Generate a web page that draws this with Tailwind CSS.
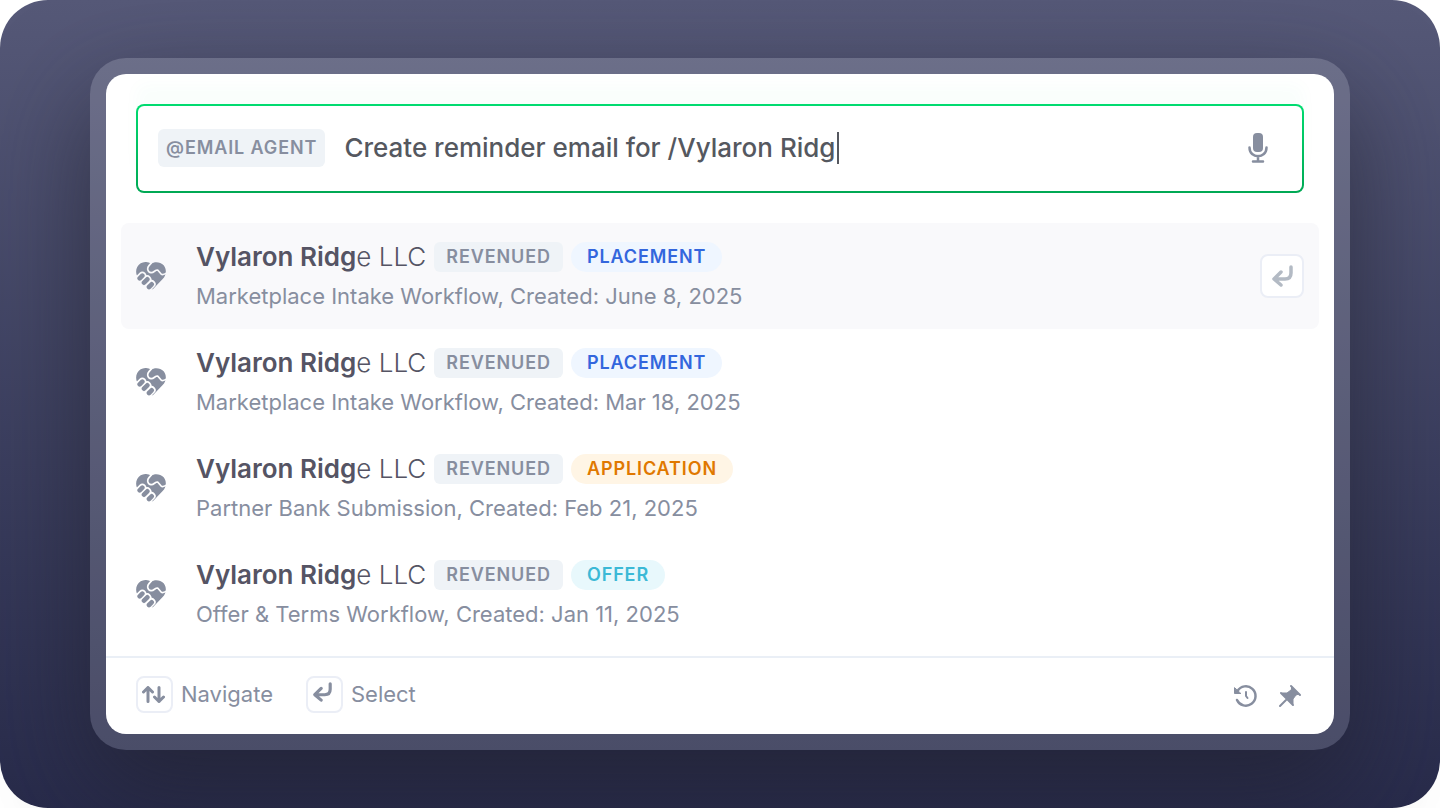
<!DOCTYPE html>
<html lang="en">
<head>
    <meta charset="UTF-8">
    <meta name="viewport" content="width=device-width, initial-scale=1.0">
    <title>Command Palette</title>
    <script src="https://cdn.jsdelivr.net/npm/@tailwindcss/browser@4"></script>
</head>
<body class="bg-white font-['Inter',sans-serif]">
    <!-- Shared icons -->
    <svg class="hidden">
        <symbol id="icon-handshake" viewBox="0 0 90 84">
            <path fill="currentColor" d="M45 5C37-1 24-2 14 4C0 13-3 31 4 43L47 82C49 82 51 81 52 80L80 51C91 40 93 22 83 10C73-1 56-2 45 5Z"/>
            <g fill="none" stroke="var(--row-bg)" stroke-linecap="round" stroke-linejoin="round">
                <path stroke-width="5" d="M47 2L39 11C32 19 35 31 45 32C54 33 57 23 65 24L76 37C80 39 86 37 94 32"/>
                <path stroke-width="24" d="M11 49L19 41M24 62L34 52M38 75L47 66"/>
                <path stroke-width="14" d="M0 62L32 92"/>
            </g>
            <path fill="none" stroke="currentColor" stroke-width="14" stroke-linecap="round" d="M11 49L19 41M24 62L34 52M39 75L47 67"/>
        </symbol>
        <symbol id="icon-enter" viewBox="0 0 21 22">
            <path fill="none" stroke="currentColor" stroke-width="3.500" stroke-linecap="round" stroke-linejoin="round" d="M19 2V8Q19 14 13 14H2.500M9 7L2 14L9 20"/>
        </symbol>
    </svg>

    <main class="flex min-h-screen items-center rounded-[48px] bg-linear-to-b from-[#565978] to-[#282b4b] px-[90px] py-[58px]">
        <div class="w-full rounded-[36px] bg-white/15 p-4 shadow-[0_40px_100px_rgba(32,32,44,0.6)]">
            <div class="overflow-hidden rounded-[20px] bg-white">

                <!-- Search box -->
                <div class="px-[30px] pt-[30px] pb-[30px]">
                    <div class="rounded-lg bg-linear-to-b from-[#00dc70] to-[#00a854] p-[2px] shadow-[0_-20px_16px_rgba(0,214,120,0.025)]">
                        <div class="flex h-[85px] items-center rounded-md bg-white pr-[34px] pb-[2px] pl-5">
                            <span class="rounded-md bg-[#eff3f7] px-2 py-[5px] text-[18px] leading-7 font-semibold tracking-wider text-[#878e9f]">@EMAIL AGENT</span>
                            <input type="text" aria-label="Ask an agent" value="Create reminder email for /Vylaron Ridg" class="ml-[19px] field-sizing-content text-[26px] leading-8 font-medium text-[#55585f] outline-none">
                            <span class="ml-[2px] h-8 w-[2px] bg-[#55585f]"></span>
                            <button type="button" aria-label="Dictate" class="ml-auto text-[#878e9f]">
                                <svg class="h-[30px] w-5" viewBox="0 0 20 30">
                                    <rect x="5" y="0" width="10" height="19" rx="4" fill="currentColor"/>
                                    <path d="M1.500 14.500C1.500 26 18.500 26 18.500 14.500M10 23V28M5 28.500H15" fill="none" stroke="currentColor" stroke-width="2.500" stroke-linecap="round"/>
                                </svg>
                            </button>
                        </div>
                    </div>
                </div>

                <!-- Results -->
                <ul class="px-[15px] pb-[9px]">
                    <li class="flex items-center rounded-lg bg-[#f9f9fb] px-[15px] py-[14px] [--row-bg:#f9f9fb]">
                        <svg class="h-7 w-[30px] shrink-0 text-[#878e9f]"><use href="#icon-handshake"/></svg>
                        <div class="ml-[30px]">
                            <div class="flex h-10 items-center gap-2">
                                <h2 class="text-[26px] leading-9 font-light text-[#555464]"><b class="font-semibold">Vylaron Ridg</b>e LLC</h2>
                                <span class="rounded-md bg-[#eff3f7] px-3 text-[18px] leading-[30px] font-semibold tracking-wider text-[#878e9f]">REVENUED</span>
                                <span class="rounded-full bg-[#eff6ff] px-4 text-[18px] leading-[30px] font-semibold tracking-wider text-[#3366dd]">PLACEMENT</span>
                            </div>
                            <p class="text-[22px] leading-[38px] text-[#878e9f]">Marketplace Intake Workflow, Created: June 8, 2025</p>
                        </div>
                        <button type="button" aria-label="Open" class="ml-auto flex size-11 items-center justify-center rounded-lg border-2 border-[#ebeef6] bg-white text-[#b3bac4]">
                            <svg class="h-[22px] w-[21px]"><use href="#icon-enter"/></svg>
                        </button>
                    </li>
                    <li class="flex items-center rounded-lg px-[15px] py-[14px] [--row-bg:#ffffff]">
                        <svg class="h-7 w-[30px] shrink-0 text-[#878e9f]"><use href="#icon-handshake"/></svg>
                        <div class="ml-[30px]">
                            <div class="flex h-10 items-center gap-2">
                                <h2 class="text-[26px] leading-9 font-light text-[#555464]"><b class="font-semibold">Vylaron Ridg</b>e LLC</h2>
                                <span class="rounded-md bg-[#eff3f7] px-3 text-[18px] leading-[30px] font-semibold tracking-wider text-[#878e9f]">REVENUED</span>
                                <span class="rounded-full bg-[#eff6ff] px-4 text-[18px] leading-[30px] font-semibold tracking-wider text-[#3366dd]">PLACEMENT</span>
                            </div>
                            <p class="text-[22px] leading-[38px] text-[#878e9f]">Marketplace Intake Workflow, Created: Mar 18, 2025</p>
                        </div>
                    </li>
                    <li class="flex items-center rounded-lg px-[15px] py-[14px] [--row-bg:#ffffff]">
                        <svg class="h-7 w-[30px] shrink-0 text-[#878e9f]"><use href="#icon-handshake"/></svg>
                        <div class="ml-[30px]">
                            <div class="flex h-10 items-center gap-2">
                                <h2 class="text-[26px] leading-9 font-light text-[#555464]"><b class="font-semibold">Vylaron Ridg</b>e LLC</h2>
                                <span class="rounded-md bg-[#eff3f7] px-3 text-[18px] leading-[30px] font-semibold tracking-wider text-[#878e9f]">REVENUED</span>
                                <span class="rounded-full bg-[#fff5e5] px-4 text-[18px] leading-[30px] font-semibold tracking-wider text-[#e07800]">APPLICATION</span>
                            </div>
                            <p class="text-[22px] leading-[38px] text-[#878e9f]">Partner Bank Submission, Created: Feb 21, 2025</p>
                        </div>
                    </li>
                    <li class="flex items-center rounded-lg px-[15px] py-[14px] [--row-bg:#ffffff]">
                        <svg class="h-7 w-[30px] shrink-0 text-[#878e9f]"><use href="#icon-handshake"/></svg>
                        <div class="ml-[30px]">
                            <div class="flex h-10 items-center gap-2">
                                <h2 class="text-[26px] leading-9 font-light text-[#555464]"><b class="font-semibold">Vylaron Ridg</b>e LLC</h2>
                                <span class="rounded-md bg-[#eff3f7] px-3 text-[18px] leading-[30px] font-semibold tracking-wider text-[#878e9f]">REVENUED</span>
                                <span class="rounded-full bg-[#e8f8fc] px-4 text-[18px] leading-[30px] font-semibold tracking-wider text-[#3cb9d6]">OFFER</span>
                            </div>
                            <p class="text-[22px] leading-[38px] text-[#878e9f]">Offer &amp; Terms Workflow, Created: Jan 11, 2025</p>
                        </div>
                    </li>
                </ul>

                <!-- Footer -->
                <footer class="flex h-[78px] items-center justify-between border-t-2 border-[#eaeff6] pr-8 pl-[30px] text-[#878e9f]">
                    <div class="flex items-center pb-1 text-[22px] leading-9">
                        <kbd class="flex size-[37px] items-center justify-center rounded-lg border-2 border-[#ebeef6] pr-[2px]">
                            <svg class="h-[17px] w-[23px]" viewBox="0 0 23 17" fill="none" stroke="currentColor" stroke-width="3" stroke-linecap="round" stroke-linejoin="round">
                                <path d="M6 15.500V1.500M1.500 6L6 1.500L10.500 6M17 1.500V15.500M12.500 11L17 15.500L21.500 11"/>
                            </svg>
                        </kbd>
                        <span class="ml-2">Navigate</span>
                        <kbd class="ml-[33px] flex size-[37px] items-center justify-center rounded-lg border-2 border-[#ebeef6] pr-1 pb-1">
                            <svg class="h-5 w-[19px]"><use href="#icon-enter"/></svg>
                        </kbd>
                        <span class="ml-2">Select</span>
                    </div>
                    <div class="flex items-center gap-5">
                        <button type="button" aria-label="History">
                            <svg class="size-6" viewBox="0 0 24 24" fill="none" stroke="currentColor" stroke-width="2.500" stroke-linecap="round" stroke-linejoin="round">
                                <path d="M3.500 7A9.700 9.700 0 1 1 3 16"/>
                                <path d="M12 8V12L13.500 14" stroke-width="2"/>
                                <path d="M0.500 4V9.500H6.500Z" fill="currentColor" stroke-width="1"/>
                            </svg>
                        </button>
                        <button type="button" aria-label="Pin">
                            <svg class="size-6" viewBox="0 0 24 24" fill="none" stroke="currentColor" stroke-width="2" stroke-linecap="round" stroke-linejoin="round">
                                <path d="M2 22L8 16M13 2L22 11M3 9L15 21"/>
                                <path d="M14 3L21 10L18 11L15 15V20L4 9H9L13 6Z" fill="currentColor" stroke-width="1"/>
                            </svg>
                        </button>
                    </div>
                </footer>
            </div>
        </div>
    </main>
</body>
</html>
